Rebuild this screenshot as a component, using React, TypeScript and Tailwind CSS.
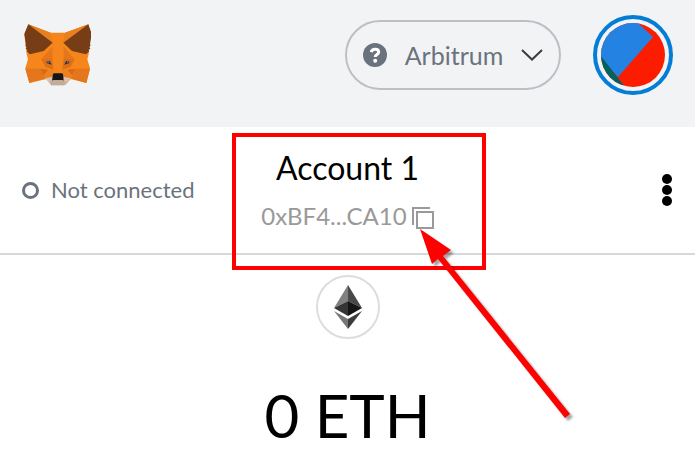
function Fox() {
  return (
    <svg viewBox="42 42 201 186" className="h-[62px] w-[67px]" role="img" aria-label="Wallet home">
      <path fill="#F6851B" d="M55 43 122 68h43l70-25 7 32-6 58-4 15 8 27-11 44-47-12-16 18h-39l-17-18-52 12-12-44 8-27-4-15-7-58z" />
      <path fill="#E8801F" d="m55 43 67 25 6 30zM235 43l-70 25-6 30z" />
      <path fill="#763D16" d="m55 43 73 55-27 25-41 10-10-9 3-4-6-4 3-5-4-5 2-3-5-32zM235 43l-75 55 26 25 42 10 10-9-3-4 6-4-3-5 4-5-2-3 5-32z" />
      <path fill="#E4761B" d="m127 110-33 38 33-2zM161 110l33 38-33-2z" />
      <path fill="#DD6F1B" d="m94 148 33-2 3 34-24-10zM194 148l-33-2-4 34 25-10z" />
      <path fill="#E4761B" d="M46 176h45l15 29-48 14zM240 176h-45l-13 29 47 14z" />
      <path fill="#D56A18" d="m91 176 24 3-14 17zM195 176l-24 3 15 17z" />
      <path fill="#EE8020" d="m115 179 14 3v18l-23 5-5-9zM171 179l-13 3v18l24 5 4-9z" />
      <path fill="#D7C1B3" d="m106 205 22-5 3 12h27l3-12 21 5-17 21h-42z" />
      <path fill="#C0AD9E" d="m118 215 9-4h33l9 4-7 11h-38z" />
      <path fill="#161616" d="m129 192 3-2h24l3 2 2 20-3-2h-28l-4 2z" />
      <path fill="#233447" d="m109 155 10-2 6 11-14-4zM179 155l-11-2-5 11 14-4z" />
      <path fill="#9b9c98" d="m111 156 5-1 1 5zM176 156l-5-1-1 5z" />
    </svg>
  );
}

function Header() {
  return (
    <header className="flex h-[127px] items-start justify-between bg-[#f2f3f5] pt-[15px] pr-[22px] pl-6">
      <a href="#home" className="mt-[9px]"><Fox /></a>
      <div className="flex items-start gap-8">
        <button className="mt-[5px] flex h-[70px] w-[216px] items-center rounded-full border-2 border-[#bbc0c5] px-4 text-[#6a737d]">
          <svg viewBox="0 0 24 24" className="size-6 shrink-0" aria-hidden="true">
            <circle cx="12" cy="12" r="12" fill="#6a737d" />
            <path d="M8.2 9.2c.5-2.2 2-3 3.9-3 2.2 0 3.6 1.1 3.6 2.9 0 2.4-3.5 2.4-3.5 5" fill="none" stroke="white" strokeWidth="3" />
            <circle cx="12.2" cy="17.8" r="2" fill="white" />
          </svg>
          <span className="flex-1 text-center text-[25px] leading-8">Arbitrum</span>
          <svg viewBox="0 0 22 12" className="h-3 w-[22px] shrink-0" aria-hidden="true">
            <path d="m1 1 10 9.5L21 1" fill="none" stroke="#3b3d40" strokeWidth="2" />
          </svg>
        </button>
        <button aria-label="Account menu" className="size-20 rounded-full border-4 border-[#037dd6] p-1">
          <svg viewBox="0 0 64 64" className="size-16 overflow-hidden rounded-full" aria-hidden="true">
            <path fill="#fc1d00" d="M0 0h64v64H0z" />
            <path fill="#2483e2" d="M0 0h37l15 14-35 40L0 35z" />
            <path fill="#01635e" d="m0 33 24 31H0z" />
          </svg>
        </button>
      </div>
    </header>
  );
}

function AccountBar() {
  return (
    <section className="relative grid h-32 grid-cols-[1fr_auto_1fr] items-center border-b-2 border-[#d6d9dc] px-[22px]">
      <button className="flex items-center gap-3 text-[#6a737d]">
        <span className="size-[17px] rounded-full border-[3px] border-[#6a737d]" />
        <span className="text-[22px] leading-6 whitespace-nowrap">Not connected</span>
      </button>
      <button className="flex flex-col items-center">
        <span className="text-[32px] leading-10 text-black">Account 1</span>
        <span className="mt-3 flex items-center gap-[5px] text-2xl leading-8 text-[#999]">
          0xBF4...CA10
          <svg viewBox="0 0 22 22" className="mt-1 size-[22px]" fill="none" stroke="#989a9b" strokeWidth="2" aria-hidden="true">
            <path d="M1 18V1h17M5 5h16v16H5z" />
          </svg>
        </span>
      </button>
      <button aria-label="Account options" className="justify-self-end">
        <svg viewBox="0 0 12 32" className="h-8 w-3" aria-hidden="true">
          <circle cx="6" cy="5" r="5" /><circle cx="6" cy="16" r="5" /><circle cx="6" cy="27" r="5" />
        </svg>
      </button>
      <div className="pointer-events-none absolute top-[6px] left-1/2 -ml-[116px] h-[137px] w-[254px] border-4 border-[#ff0000]" />
      <svg viewBox="0 0 170 200" className="pointer-events-none absolute top-[97px] left-1/2 z-10 ml-[68px] h-[200px] w-[170px] drop-shadow-[3px_3px_1px_rgba(0,0,0,0.35)]" aria-hidden="true">
        <path fill="#ff0000" d="m4 5 31 21-8 6 127 158-5 4L22 35l-6 5z" />
      </svg>
    </section>
  );
}

export default function App() {
  return (
    <div className="min-h-screen bg-white font-['Lato',sans-serif]">
      <Header />
      <AccountBar />
      <main className="flex flex-col items-center pt-5">
        <div className="flex size-16 items-center justify-center rounded-full border-2 border-[#dcdddf]">
          <svg viewBox="0 0 28 44" className="h-11 w-7" role="img" aria-label="Ethereum">
            <path fill="#808080" d="M14 0 0 23l14-7z" />
            <path fill="#484848" d="m14 0 14 23-14-7z" />
            <path fill="#353535" d="m0 23 14-7v15z" />
            <path fill="#151515" d="m28 23-14-7v15z" />
            <path fill="#777" d="m0 26 14 8v10z" />
            <path fill="#3c3c3b" d="m28 26-14 8v10z" />
          </svg>
        </div>
        <h1 className="mt-10 text-6xl leading-[72px] text-black">0 ETH</h1>
      </main>
    </div>
  );
}
